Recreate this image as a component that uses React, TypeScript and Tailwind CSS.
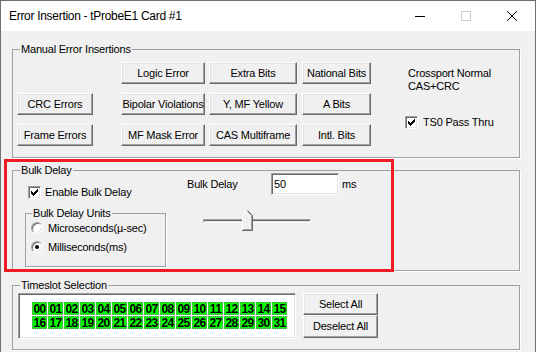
import type { ReactNode } from 'react'
import { clsx } from 'clsx'

const btnCls =
  'flex items-center justify-center bg-[#f0f0f0] border border-t-white border-l-white border-r-[#696969] border-b-[#696969] shadow-[inset_-1px_-1px_0_#a0a0a0,inset_1px_1px_0_#e3e3e3] leading-none whitespace-nowrap'

function Btn({ className, children }: { className?: string; children: ReactNode }) {
  return <div className={clsx(btnCls, 'h-[22px]', className)}>{children}</div>
}

function Group({ label, className, children }: { label: string; className?: string; children: ReactNode }) {
  return (
    <fieldset className={clsx('min-w-0 border border-[#a0a0a0] shadow-[1px_1px_0_#fff]', className)}>
      <legend className="ml-[7px] px-[1px] leading-[12px]">{label}</legend>
      {children}
    </fieldset>
  )
}

// classic 7x7 tick
const tick = [
  [6, 0], [5, 1], [6, 1], [0, 2], [4, 2], [5, 2], [6, 2], [0, 3], [1, 3], [3, 3], [4, 3], [5, 3],
  [0, 4], [1, 4], [2, 4], [3, 4], [4, 4], [1, 5], [2, 5], [3, 5], [2, 6],
]

function CheckBox({ checked }: { checked?: boolean }) {
  return (
    <span className="relative block size-[13px] shrink-0 bg-white border border-t-[#a0a0a0] border-l-[#a0a0a0] border-r-white border-b-white shadow-[inset_1px_1px_0_#696969,inset_-1px_-1px_0_#e3e3e3]">
      {checked && (
        <svg className="absolute left-[2px] top-[2px]" width="7" height="7" viewBox="0 0 7 7" shapeRendering="crispEdges">
          {tick.map(([x, y]) => (
            <rect key={`${x}-${y}`} x={x} y={y} width="1" height="1" fill="#000" />
          ))}
        </svg>
      )}
    </span>
  )
}

function Radio({ checked }: { checked?: boolean }) {
  return (
    <span className="flex size-[12px] shrink-0 items-center justify-center rounded-full bg-white border border-t-[#a0a0a0] border-l-[#a0a0a0] border-r-white border-b-white shadow-[inset_1px_1px_0_#696969,inset_-1px_-1px_0_#e3e3e3]">
      {checked && <span className="size-[4px] rounded-full bg-black" />}
    </span>
  )
}

const slots = Array.from({ length: 32 }, (_, i) => String(i).padStart(2, '0'))

export default function App() {
  return (
    <div className="relative h-[352px] w-[536px] overflow-hidden bg-[#f0f0f0] font-['Liberation_Sans',Arial,sans-serif] text-[11px] tracking-[-0.2px] text-black">
      <div className="h-full border-x border-t border-[#707070]">
        {/* Title bar */}
        <div className="flex h-[30px] items-center bg-white">
          <div className="flex-1 pl-[8px] text-[12px] tracking-[-0.3px]">Error Insertion - tProbeE1 Card #1</div>
          <div className="flex h-full w-[46px] items-center justify-center">
            <span className="block h-[1px] w-[10px] bg-black" />
          </div>
          <div className="flex h-full w-[46px] items-center justify-center">
            <span className="block size-[10px] border border-[#cccccc]" />
          </div>
          <div className="flex h-full w-[46px] items-center justify-center">
            <svg width="10" height="10" viewBox="0 0 10 10">
              <path d="M0 0 L10 10 M10 0 L0 10" stroke="#000" strokeWidth="1" />
            </svg>
          </div>
        </div>

        {/* Body */}
        <div className="pl-[11px] pt-[12px]">
          <Group label="Manual Error Insertions" className="h-[115px] w-[508px]">
            <div className="flex pl-[4px] pt-[7px]">
              <div className="mt-[31px] flex w-[76px] flex-col gap-[9px]">
                <Btn>CRC Errors</Btn>
                <Btn>Frame Errors</Btn>
              </div>
              <div className="ml-[28px] flex w-[84px] flex-col gap-[9px]">
                <Btn>Logic Error</Btn>
                <Btn>Bipolar Violations</Btn>
                <Btn>MF Mask Error</Btn>
              </div>
              <div className="ml-[4px] flex w-[88px] flex-col gap-[9px]">
                <Btn>Extra Bits</Btn>
                <Btn>Y, MF Yellow</Btn>
                <Btn>CAS Multiframe</Btn>
              </div>
              <div className="ml-[5px] flex w-[69px] flex-col gap-[9px]">
                <Btn>National Bits</Btn>
                <Btn>A Bits</Btn>
                <Btn>Intl. Bits</Btn>
              </div>
              <div className="ml-[37px] mt-[5px] flex flex-col leading-[13px]">
                <span>Crossport Normal</span>
                <span>CAS+CRC</span>
                <div className="-ml-[3px] mt-[23px] flex items-center gap-[5px]">
                  <CheckBox checked />
                  <span>TS0 Pass Thru</span>
                </div>
              </div>
            </div>
          </Group>

          <Group label="Bulk Delay" className="mt-[6px] h-[107px] w-[508px]">
            <div className="flex">
              <div className="flex flex-col">
                <div className="ml-[15px] mt-[10px] flex h-[13px] items-center gap-[4px]">
                  <CheckBox checked />
                  <span>Enable Bulk Delay</span>
                </div>
                <Group label="Bulk Delay Units" className="ml-[12px] mt-[8px] h-[60px] w-[141px] [&>legend]:ml-[6px]">
                  <div className="flex flex-col pl-[5px] pt-[3px]">
                    <div className="flex h-[12px] items-center gap-[5px]">
                      <Radio />
                      <span>Microseconds(µ-sec)</span>
                    </div>
                    <div className="mt-[7px] flex h-[12px] items-center gap-[5px]">
                      <Radio checked />
                      <span>Milliseconds(ms)</span>
                    </div>
                  </div>
                </Group>
              </div>
              <div className="ml-[21px] flex flex-col">
                <div className="-mt-[3px] flex h-[22px] items-center">
                  <span className="w-[84px]">Bulk Delay</span>
                  <div className="flex h-[22px] w-[68px] items-center bg-white pl-[2px] border border-t-[#a0a0a0] border-l-[#a0a0a0] border-r-white border-b-white shadow-[inset_1px_1px_0_#696969,inset_-1px_-1px_0_#e3e3e3]">
                    50
                  </div>
                  <span className="ml-[3px]">ms</span>
                </div>
                <div className="relative ml-[16px] mt-[15px] h-[21px] w-[108px]">
                  <div className="absolute left-0 right-0 top-[9px] h-[4px] border border-t-[#a0a0a0] border-l-[#a0a0a0] border-r-white border-b-white bg-[#e3e3e3] shadow-[inset_0_1px_0_#696969]" />
                  <svg className="absolute left-[39px] top-0" width="11" height="21" viewBox="0 0 11 21">
                    <polygon points="0.5,20.5 0.5,5.5 5.5,0.5 10.5,5.5 10.5,20.5" fill="#f0f0f0" />
                    <polyline points="0.5,20 0.5,5.5 5.5,0.5" fill="none" stroke="#fff" />
                    <polyline points="5.5,1.5 9.5,5.5 9.5,19.5 1.5,19.5" fill="none" stroke="#a0a0a0" />
                    <polyline points="5.5,0.5 10.5,5.5 10.5,20.5 0,20.5" fill="none" stroke="#696969" />
                  </svg>
                </div>
              </div>
            </div>
          </Group>

          <Group label="Timeslot Selection" className="mt-[8px] h-[71px] w-[508px]">
            <div className="mt-[2px] flex pl-[5px]">
              <div className="h-[46px] w-[278px] bg-white pl-[13px] pt-[8px] border border-t-[#a0a0a0] border-l-[#a0a0a0] border-r-white border-b-white shadow-[inset_1px_1px_0_#696969,inset_-1px_-1px_0_#e3e3e3]">
                <div className="grid grid-cols-[repeat(16,15px)] gap-x-[1px] gap-y-[1px]">
                  {slots.map((s) => (
                    <span
                      key={s}
                      className="flex h-[13px] items-center justify-center overflow-visible border border-dotted border-[#808080] bg-[#00ff00] text-[12px] font-bold leading-none tracking-[-0.6px]"
                    >
                      {s}
                    </span>
                  ))}
                </div>
              </div>
              <div className="ml-[7px] flex w-[75px] flex-col">
                <Btn>Select All</Btn>
                <div className={clsx(btnCls, 'h-[23px]')}>Deselect All</div>
              </div>
            </div>
          </Group>
        </div>
      </div>

      {/* annotation */}
      <div className="absolute left-[4px] top-[159px] h-[113px] w-[390px] border-[3px] border-[#ed1c24]" />
    </div>
  )
}
